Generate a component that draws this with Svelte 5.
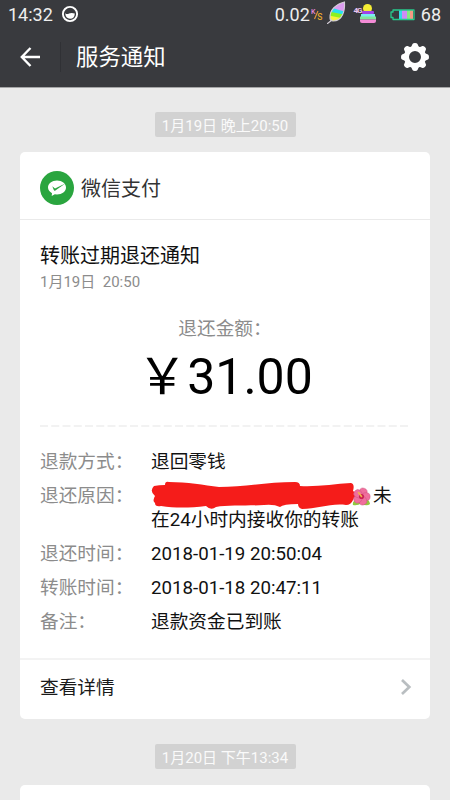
<script>
    const details = [
        { label: "退款方式：", value: "退回零钱" },
        { label: "退还原因：", value: "在24小时内接收你的转账", hidden: true },
        { label: "退还时间：", value: "2018-01-19 20:50:04" },
        { label: "转账时间：", value: "2018-01-18 20:47:11" },
        { label: "备注：", value: "退款资金已到账" },
    ];

    // rotation of each tooth / petal
    const teeth = [0, 45, 90, 135, 180, 225, 270, 315];
    const petals = [0, 72, 144, 216, 288];
</script>

<div class="screen">
    <header>
        <div class="status">
            <span class="clock">14:32</span>
            <svg class="face" width="18" height="18" viewBox="0 0 18 18">
                <circle cx="9" cy="9" r="7.1" fill="none" stroke="#fff" stroke-width="1.9" />
                <path d="M4.2 8.2Q6 9.800 8 8.600Q10 7.500 13.800 8.400Q13.600 13.500 9 13.700Q4.600 13.300 4.200 8.200Z" fill="#fff" />
            </svg>
            <span class="speed">0.02</span>
            <svg class="unit" width="12" height="13" viewBox="0 0 12 13" font-weight="500">
                <text x="0" y="5.500" font-size="7" fill="#e48adb">K</text>
                <path d="M3.500 11L7 3" stroke="#e8973a" stroke-width="1.100" />
                <text x="6.300" y="11.800" font-size="8.500" fill="#e5a82d">S</text>
            </svg>
            <svg class="leaf" width="20" height="24" viewBox="0 0 20 24">
                <defs>
                    <clipPath id="leaf">
                        <path d="M18.500 1C19 9 17 20 7 20Q4 20 4 17C3.500 9 10 3 18.500 1Z" />
                    </clipPath>
                </defs>
                <g clip-path="url(#leaf)">
                    <rect width="20" height="24" fill="#dc9cf0" />
                    <path d="M0 5L20 11V24H0Z" fill="#28dff0" />
                    <path d="M0 10L20 14V24H0Z" fill="#8df020" />
                    <path d="M0 14L20 18V24H0Z" fill="#f8f23c" />
                </g>
                <path d="M18.500 1C19 9 17 20 7 20Q4 20 4 17C3.500 9 10 3 18.500 1ZM6 19L1.500 22.500" fill="none" stroke="#d5ced8" stroke-width="1.100" stroke-linecap="round" />
            </svg>
            <svg class="signal" width="24" height="22" viewBox="0 0 24 22">
                <circle cx="14.500" cy="5.500" r="4.500" fill="#f5ed35" />
                <rect x="9" y="8" width="12" height="3" rx="1" fill="#a044e8" />
                <rect x="8" y="11" width="14" height="3" fill="#7cecf0" />
                <rect x="7" y="13.500" width="16" height="3" fill="#80e79b" />
                <path d="M7 16.500H23V18Q23 20 21 20H9Q7 20 7 18Z" fill="#f48bd6" />
                <text x="0.500" y="10" font-size="8" font-weight="700" fill="#e9c4ee" textLength="9">4G</text>
            </svg>
            <svg class="battery" width="25" height="12" viewBox="0 0 25 12">
                <rect x="9" y="1" width="3" height="9" fill="#35dbe8" />
                <rect x="12" y="1" width="5" height="9" fill="#cf8cf5" />
                <rect x="17" y="1" width="3" height="9" fill="#85ec82" />
                <rect x="20" y="1" width="3" height="9" fill="#f39a83" />
                <path d="M3 1H24V10.500H3V8.500H1V3H3Z" fill="none" stroke="#27c98c" stroke-width="1.300" stroke-linejoin="round" />
            </svg>
            <span class="level">68</span>
        </div>
        <div class="nav">
            <svg class="back" width="20" height="20" viewBox="0 0 20 20" fill="none" stroke="#fff" stroke-width="2.400">
                <path d="M10.500 1L1.800 10L10.500 19M2 10H20" />
            </svg>
            <span class="divider"></span>
            <h1>服务通知</h1>
            <svg width="28" height="28" viewBox="-14 -14 28 28">
                <circle r="8.500" fill="none" stroke="#fff" stroke-width="5" />
                {#each teeth as angle}
                    <path d="M-4 -9.500L-2.500 -13Q-2 -14 0 -14Q2 -14 2.500 -13L4 -9.500Z" fill="#fff" transform="rotate({angle})" />
                {/each}
            </svg>
        </div>
    </header>

    <main>
        <time>1月19日 晚上20:50</time>

        <section class="card">
            <div class="sender">
                <svg width="34" height="34" viewBox="0 0 34 34">
                    <circle cx="17" cy="17" r="17" fill="#2aa53f" />
                    <path d="M17 9.500C22 9.500 26 12.600 26 16.500S22 23.500 17 23.500L14.800 23.200L11.700 25L12 22.200C9.700 20.900 8 18.800 8 16.500C8 12.600 12 9.500 17 9.500Z" fill="#fff" />
                    <path d="M12.300 15.200L15 17.500L25.300 12.400L15 19.800Q14.100 20 13.800 19Z" fill="#2aa53f" />
                </svg>
                <span>微信支付</span>
            </div>

            <div class="body">
                <h2>转账过期退还通知</h2>
                <p class="date">1月19日&nbsp; 20:50</p>
                <p class="caption">退还金额：</p>
                <p class="amount">￥31.00</p>
                <svg class="dashes" width="370" height="2" viewBox="0 0 370 2">
                    <path d="M0 1H370" stroke="#eee" stroke-width="1.300" stroke-dasharray="8 3.250" />
                </svg>

                <dl>
                    {#each details as row}
                        <dt>{row.label}</dt>
                        <dd>
                            {#if row.hidden}
                                <div class="covered">
                                    <svg class="scribble" width="206" height="29" viewBox="0 0 206 29">
                                        <path
                                            d="M3 5Q8 4 14 4Q14 0 18 1C36 1 53 4 68 6C91 6 117 1 144 1Q149 1 149 5C166 6 183 3 200 2Q204 3 202 10Q207 12 206 17Q202 17 202 19Q200 24 195 24C180 22 166 28 151 28Q147 27 147 23Q132 23 129 26Q123 23 113 24C98 25 77 24 65 26Q60 30 55 25C38 27 24 27 10 25Q4 26 4 22Q1 20 4 15Q-2 10 3 5Z"
                                            fill="#f51c1a"
                                        />
                                    </svg>
                                    <svg class="flower" width="19" height="19" viewBox="-10 -10 20 20">
                                        <path d="M-3 4Q-10 3 -9 9Q-4 10 0 7Q5 11 9 8Q8 2 3 4Z" fill="#91c83f" />
                                        {#each petals as angle}
                                            <ellipse cy="-4.800" rx="4.200" ry="4.300" fill="#f06f9d" stroke="#cf5280" stroke-width="0.500" transform="rotate({angle + 20})" />
                                        {/each}
                                        <circle r="2.700" fill="#c92354" />
                                        <path d="M0 0L-3 -4" stroke="#f1b648" stroke-width="1.700" stroke-linecap="round" />
                                    </svg>
                                    <span>未</span>
                                </div>
                            {/if}
                            {row.value}
                        </dd>
                    {/each}
                </dl>
            </div>

            <div class="more">
                <span>查看详情</span>
                <svg width="12" height="16" viewBox="0 0 12 16" fill="none" stroke="#b9bec1" stroke-width="2.700">
                    <path d="M2 1L9.300 8L2 15" />
                </svg>
            </div>
        </section>

        <time>1月20日 下午13:34</time>

        <section class="card next"></section>
    </main>
</div>

<style>
    :global(body) {
        margin: 0;
    }

    .screen {
        width: 450px;
        height: 800px;
        overflow: hidden;
        background: #eaeaea;
        color: #1a1a1a;
        font-family: Roboto, "Noto Sans CJK SC", sans-serif;
    }

    h1,
    h2,
    p,
    dl,
    dd {
        margin: 0;
        font-weight: 400;
    }

    svg {
        display: block;
        flex-shrink: 0;
    }

    header {
        height: 88px;
        background: #393a3e;
        border-bottom: 1px solid #a5a5a6;
        box-sizing: border-box;
        color: #fff;
    }

    .status {
        display: flex;
        align-items: center;
        height: 28px;
        padding: 0 9px 0 8px;
        font-size: 18px;
        color: #eee;
    }

    .face {
        margin-left: 8px;
    }

    .speed {
        margin-left: auto;
    }

    .unit {
        margin: 0 3px 0 1px;
    }

    .leaf {
        margin: -2px 7px 0 0;
    }

    .signal {
        margin-right: 13px;
    }

    .battery {
        margin: 1px 6px 0 0;
    }

    .nav {
        display: flex;
        align-items: center;
        height: 58px;
        padding: 0 21px;
    }

    .back {
        margin-left: -1px;
    }

    .divider {
        width: 1px;
        height: 30px;
        margin: 0 15px 0 20px;
        background: #303135;
    }

    h1 {
        flex: 1;
        font-size: 22.4px;
        line-height: 30px;
    }

    main {
        display: flex;
        flex-direction: column;
        align-items: center;
        padding-top: 24px;
    }

    time {
        box-sizing: border-box;
        width: 141px;
        height: 25px;
        padding-top: 1px;
        border-radius: 2px;
        background: #d2d2d2;
        color: #fafafa;
        font-size: 15px;
        line-height: 26px;
        text-align: center;
        white-space: nowrap;
    }

    .card {
        width: 410px;
        margin: 15px 0 25px;
        border-radius: 5px;
        background: #fff;
    }

    .sender {
        display: flex;
        align-items: center;
        gap: 7px;
        height: 68px;
        padding: 2px 20px 0;
        box-sizing: border-box;
        border-bottom: 1px solid #eaeaea;
        font-size: 20px;
        color: #333;
    }

    .sender svg {
        margin-top: 3px;
    }

    .sender span {
        margin-top: 2px;
    }

    .body {
        height: 438px;
        padding: 21px 20px 0;
        box-sizing: border-box;
    }

    h2 {
        font-size: 20px;
        line-height: 30px;
        color: #111;
    }

    .date {
        font-size: 15px;
        line-height: 22px;
        color: #8c8c8c;
    }

    .caption {
        margin-top: 22px;
        font-size: 18.7px;
        line-height: 28px;
        color: #8c8c8c;
        text-align: center;
    }

    .amount {
        margin-top: 4px;
        font-size: 50px;
        line-height: 60px;
        color: #000;
        text-align: center;
    }

    .dashes {
        margin-top: 18px;
    }

    dl {
        display: grid;
        grid-template-columns: 100px 1fr;
        column-gap: 11px;
        row-gap: 10px;
        margin-top: 23px;
        font-size: 18.7px;
        line-height: 24px;
    }

    dt {
        color: #8c8c8c;
        white-space: nowrap;
    }

    dd {
        color: #111;
    }

    .covered {
        display: flex;
        height: 24px;
    }

    .scribble {
        margin: -3px -4px 0 0;
    }

    .flower {
        margin: 3px 2px 0 -1px;
    }

    .more {
        display: flex;
        align-items: center;
        justify-content: space-between;
        height: 61px;
        padding: 0 18px 6px 20px;
        box-sizing: border-box;
        border-top: 2px solid #f3f3f3;
        font-size: 18.7px;
    }

    .more span {
        margin-top: -3px;
    }

    .next {
        height: 60px;
        margin-top: 16px;
    }
</style>
